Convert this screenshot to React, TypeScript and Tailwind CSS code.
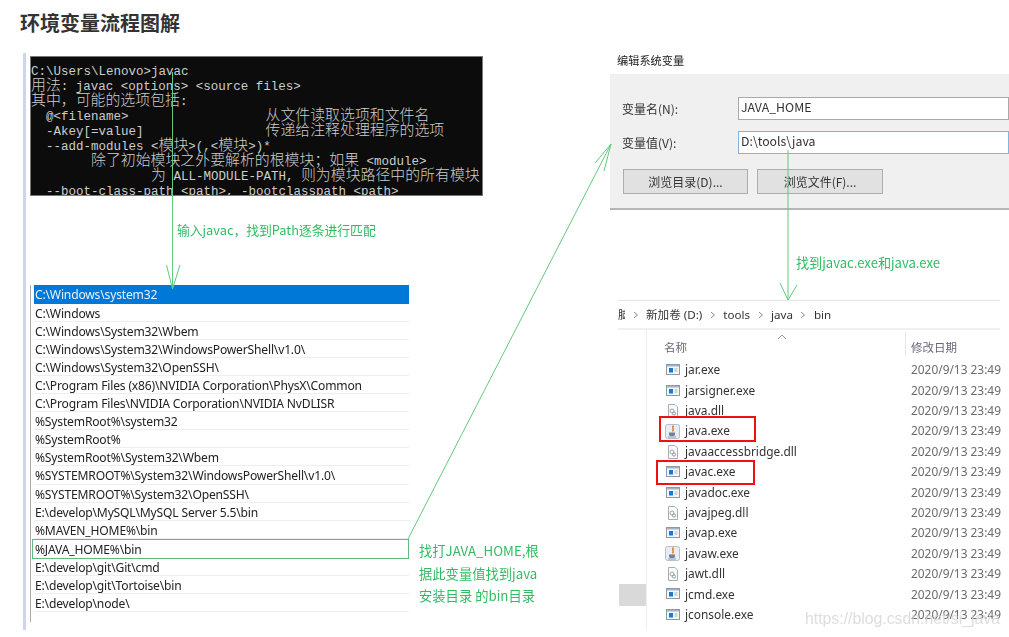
import React from 'react';

const cjk = '[font-family:"Noto_Sans_CJK_SC","Noto_Sans",sans-serif]';

// wide glyphs in the console are 15px while latin is 12.5px mono
const Zh: React.FC<{ children: React.ReactNode }> = ({ children }) => (
    <span className="font-['Noto_Sans_CJK_SC',sans-serif] text-[14.9px] leading-[0] font-light">{children}</span>
);

const ConsoleLine: React.FC<{ children: React.ReactNode }> = ({ children }) => (
    <div className="h-[15px] overflow-visible">{children}</div>
);

const pathRows = [
    'C:\\Windows',
    'C:\\Windows\\System32\\Wbem',
    'C:\\Windows\\System32\\WindowsPowerShell\\v1.0\\',
    'C:\\Windows\\System32\\OpenSSH\\',
    'C:\\Program Files (x86)\\NVIDIA Corporation\\PhysX\\Common',
    'C:\\Program Files\\NVIDIA Corporation\\NVIDIA NvDLISR',
    '%SystemRoot%\\system32',
    '%SystemRoot%',
    '%SystemRoot%\\System32\\Wbem',
    '%SYSTEMROOT%\\System32\\WindowsPowerShell\\v1.0\\',
    '%SYSTEMROOT%\\System32\\OpenSSH\\',
    'E:\\develop\\MySQL\\MySQL Server 5.5\\bin',
    '%MAVEN_HOME%\\bin',
];

const pathRowsAfter = ['E:\\develop\\git\\Git\\cmd', 'E:\\develop\\git\\Tortoise\\bin', 'E:\\develop\\node\\'];

type FileKind = 'exe' | 'dll' | 'java';

const files: { name: string; kind: FileKind }[] = [
    { name: 'jar.exe', kind: 'exe' },
    { name: 'jarsigner.exe', kind: 'exe' },
    { name: 'java.dll', kind: 'dll' },
    { name: 'java.exe', kind: 'java' },
    { name: 'javaaccessbridge.dll', kind: 'dll' },
    { name: 'javac.exe', kind: 'exe' },
    { name: 'javadoc.exe', kind: 'exe' },
    { name: 'javajpeg.dll', kind: 'dll' },
    { name: 'javap.exe', kind: 'exe' },
    { name: 'javaw.exe', kind: 'java' },
    { name: 'jawt.dll', kind: 'dll' },
    { name: 'jcmd.exe', kind: 'exe' },
    { name: 'jconsole.exe', kind: 'exe' },
];

const FileIcon: React.FC<{ kind: FileKind }> = ({ kind }) => {
    if (kind === 'exe') {
        return (
            <svg width="14" height="14" viewBox="0 0 14 14" className="shrink-0">
                <rect x="0.5" y="1.5" width="13" height="10" fill="#f4f6f8" stroke="#8d99a6" />
                <rect x="1" y="2" width="12" height="1.5" fill="#9fb4c8" />
                <rect x="3" y="5" width="4" height="4.5" fill="#1479d8" />
                <rect x="8.5" y="5.5" width="3" height="1" fill="#aab4be" />
                <rect x="8.5" y="7.5" width="3" height="1" fill="#aab4be" />
            </svg>
        );
    }
    if (kind === 'dll') {
        return (
            <svg width="14" height="14" viewBox="0 0 14 14" className="shrink-0">
                <path d="M2.5 0.5H9L11.5 3V13.5H2.5Z" fill="#fbfbfb" stroke="#a8aeb5" />
                <circle cx="6" cy="7" r="2" fill="none" stroke="#9aa6b2" />
                <circle cx="8" cy="9.5" r="1.6" fill="none" stroke="#8f9baa" />
            </svg>
        );
    }
    return (
        <svg width="15" height="15" viewBox="0 0 15 15" className="-ml-px shrink-0">
            <rect x="0.5" y="0.5" width="14" height="14" rx="2" fill="#e9ecf0" stroke="#b8bec6" />
            <path d="M8.5 1.5C6 4 10 5 7.5 7.5" fill="none" stroke="#e07a1f" strokeWidth="1.5" />
            <path d="M4 8.5H10V10.5C10 11.5 9 12 7 12S4 11.5 4 10.5Z" fill="#6d8299" />
            <rect x="3" y="12.5" width="8" height="1" fill="#8a9bb0" />
        </svg>
    );
};

const SmallChevron = () => (
    <svg width="6" height="8" viewBox="0 0 6 8" className="shrink-0">
        <path d="M1 1L4.5 4L1 7" fill="none" stroke="#8a8a8a" strokeWidth="1" />
    </svg>
);

export default function App() {
    return (
        <div className={`relative h-[637px] w-[1009px] overflow-hidden bg-white ${cjk}`}>
            <h1 className="pl-5 pt-[9px] h-[53px] text-[20px] leading-[27px] font-bold text-[#333]">环境变量流程图解</h1>

            <div className="ml-[23px] h-[577px] border-l-[3px] border-[#ccd5eb] grid grid-cols-[584px_399px] blur-[0.3px]">
                {/* left column: console + Path list */}
                <div className="flex flex-col">
                    <div className="ml-[5px] mt-1 h-[138px] w-[451px] shrink-0 overflow-hidden bg-[#0c0c0c] outline-1 outline-[#777] pt-[8px] font-['Liberation_Mono',monospace] text-[12.5px] leading-[15px] whitespace-pre text-[#cccccc]">
                        <ConsoleLine>{'C:\\Users\\Lenovo>javac'}</ConsoleLine>
                        <ConsoleLine><Zh>用法</Zh>{': javac <options> <source files>'}</ConsoleLine>
                        <ConsoleLine><Zh>其中，可能的选项包括</Zh>{':'}</ConsoleLine>
                        <ConsoleLine>{'  @<filename>                  '}<span className="ml-[2px]" /><Zh>从文件读取选项和文件名</Zh></ConsoleLine>
                        <ConsoleLine>{'  -Akey[=value]                '}<span className="ml-[2px]" /><Zh>传递给注释处理程序的选项</Zh></ConsoleLine>
                        <ConsoleLine>{'  --add-modules <'}<Zh>模块</Zh>{'>(,<'}<Zh>模块</Zh>{'>)*'}</ConsoleLine>
                        <ConsoleLine>{'        '}<Zh>除了初始模块之外要解析的根模块；如果</Zh>{' <module>'}</ConsoleLine>
                        <ConsoleLine>{'                '}<Zh>为</Zh>{' ALL-MODULE-PATH, '}<Zh>则为模块路径中的所有模块</Zh></ConsoleLine>
                        <ConsoleLine>{'  --boot-class-path <path>, -bootclasspath <path>'}</ConsoleLine>
                    </div>

                    <div className="ml-[151px] mt-[26px] h-[64px] shrink-0 text-[12.8px] leading-[18px] text-[#2fbd62]">输入javac，找到Path逐条进行匹配</div>

                    <div className="ml-[4px] h-[337px] border-l border-[#aaa] pl-[3px] font-['Noto_Sans',sans-serif] text-[12.1px] tracking-[-0.18px] text-[#222]">
                        <div className="h-[18.5px] w-[375px] bg-[#0078d7] pl-px leading-[19px] text-[#e8f2fb]">C:\Windows\system32</div>
                        {pathRows.map(row => (
                            <div key={row} className="h-[18.12px] w-[375px] border-b border-[#eeeeee] pl-px leading-[19.5px]">{row}</div>
                        ))}
                        <div className="-ml-[2px] -mb-px h-[20px] w-[377px] border border-[#5dbb7d] pl-[2px] leading-[19px]">%JAVA_HOME%\bin</div>
                        {pathRowsAfter.map(row => (
                            <div key={row} className="h-[18.12px] w-[375px] border-b border-[#eeeeee] pl-px leading-[19.5px]">{row}</div>
                        ))}
                    </div>
                </div>

                {/* right column: edit dialog + explorer */}
                <div className="flex flex-col">
                    <div className="h-[21px] shrink-0 pl-[7px] text-[11.2px] leading-[14px] text-[#222]">编辑系统变量</div>

                    <div className="h-[136px] shrink-0 border-b-2 border-[#b5b5b5] bg-[#f0f0f0] pt-[23px] text-[12px] text-[#333]">
                        <div className="flex h-[23px] items-center">
                            <span className="w-[128px] pl-3">变量名(N):</span>
                            <div className="h-[23px] flex-1 border border-[#a9a9a9] bg-white pl-[2px] text-[12.3px] leading-[18px]">JAVA_HOME</div>
                        </div>
                        <div className="mt-[11px] flex h-[23px] items-center">
                            <span className="w-[128px] pl-3">变量值(V):</span>
                            <div className="h-[23px] flex-1 border border-[#7fb6e0] bg-white pl-[2px] text-[12.3px] leading-[18px]">D:\tools\java</div>
                        </div>
                        <div className="ml-[13px] mt-[15px] flex gap-[9px]">
                            <div className="flex h-[25px] w-[125px] items-center justify-center border border-[#adadad] bg-[#e1e1e1]">浏览目录(D)...</div>
                            <div className="flex h-[25px] w-[126px] items-center justify-center border border-[#adadad] bg-[#e1e1e1]">浏览文件(F)...</div>
                        </div>
                    </div>

                    <div className="ml-[186px] mt-[44px] h-[46px] shrink-0 text-[13.1px] leading-[18px] text-[#2fbd62]">找到javac.exe和java.exe</div>

                    <div className="ml-2 h-[30px] w-[382px] shrink-0 flex items-center gap-[7.5px] overflow-hidden border-t border-[#e6e6e6] border-b-2 border-b-[#f0f0f0] text-[11.6px] text-[#333] font-['Noto_Sans','Noto_Sans_CJK_SC',sans-serif]">
                        <span className="w-[7px] overflow-hidden">脑</span>
                        <SmallChevron />
                        <span>新加卷 (D:)</span>
                        <SmallChevron />
                        <span>tools</span>
                        <SmallChevron />
                        <span>java</span>
                        <SmallChevron />
                        <span>bin</span>
                    </div>

                    <div className="flex flex-1">
                        <div className="ml-[9px] w-[27px] pt-[254px]">
                            <div className="h-[22px] w-[27px] bg-[#d9d9d9]" />
                        </div>
                        <div className="flex-1 border-l border-[#eeeeee] pl-[17px] font-['Noto_Sans','Noto_Sans_CJK_SC',sans-serif]">
                            <div className="relative flex h-[30px] items-end pb-[4px] text-[11.5px] text-[#667]">
                                <span className="w-[241px]">名称</span>
                                <span className="h-[24px] border-l border-[#e5e5e5] pl-[5px] leading-[31px]">修改日期</span>
                                <svg width="10" height="6" viewBox="0 0 10 6" className="absolute left-[113px] top-[4px]">
                                    <path d="M1 5L5 1L9 5" fill="none" stroke="#999" />
                                </svg>
                            </div>
                            {files.map(f => (
                                <div key={f.name} className="flex h-[20.4px] items-center text-[11.9px] text-[#333]">
                                    <div className="flex w-[247px] items-center gap-[5px] pl-[2px]">
                                        <FileIcon kind={f.kind} />
                                        <span>{f.name}</span>
                                    </div>
                                    <span className="text-[#6b6b6b]">2020/9/13 23:49</span>
                                </div>
                            ))}
                        </div>
                    </div>
                </div>
            </div>

            {/* annotation over the shots */}
            <div className="absolute left-[419px] top-[540px] text-[13.3px] leading-[22.5px] text-[#2fbd62]">
                <div>找打JAVA_HOME,根</div>
                <div>据此变量值找到java</div>
                <div>安装目录 的bin目录</div>
            </div>

            {/* red highlight boxes */}
            <div className="absolute left-[659px] top-[416px] h-[26px] w-[97px] border-2 border-[#f01010]" />
            <div className="absolute left-[656px] top-[460px] h-[25px] w-[99px] border-2 border-[#f01010]" />

            {/* watermark */}
            <div className="absolute left-[805px] top-[608px] font-['Liberation_Sans',sans-serif] text-[15.8px] leading-[22px] text-[#d4d4d4]/80">https://blog.csdn.net/si_java</div>

            {/* flow arrows */}
            <svg width="1009" height="637" viewBox="0 0 1009 637" className="pointer-events-none absolute left-0 top-0">
                <g fill="none" stroke="#63c97f" strokeWidth="1">
                    <path d="M172.5 72V289" />
                    <path d="M166.5 265L172.5 289L180 265" />
                    <path d="M408 539L611 144" />
                    <path d="M595 163L611 144L604 171" />
                    <path d="M788 150V300" />
                    <path d="M780 283L788 300L797 285" />
                </g>
            </svg>
        </div>
    );
}
